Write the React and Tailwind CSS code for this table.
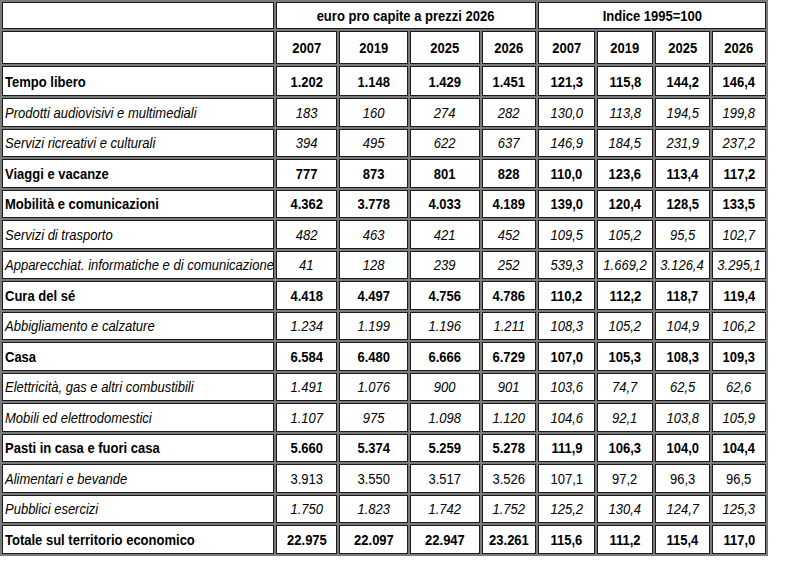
const rows = [
  { label: 'Tempo libero', type: 'bold', values: ['1.202', '1.148', '1.429', '1.451', '121,3', '115,8', '144,2', '146,4'] },
  { label: 'Prodotti audiovisivi e multimediali', type: 'italic', values: ['183', '160', '274', '282', '130,0', '113,8', '194,5', '199,8'] },
  { label: 'Servizi ricreativi e culturali', type: 'italic', values: ['394', '495', '622', '637', '146,9', '184,5', '231,9', '237,2'] },
  { label: 'Viaggi e vacanze', type: 'bold', values: ['777', '873', '801', '828', '110,0', '123,6', '113,4', '117,2'] },
  { label: 'Mobilità e comunicazioni', type: 'bold', values: ['4.362', '3.778', '4.033', '4.189', '139,0', '120,4', '128,5', '133,5'] },
  { label: 'Servizi di trasporto', type: 'italic', values: ['482', '463', '421', '452', '109,5', '105,2', '95,5', '102,7'] },
  { label: 'Apparecchiat. informatiche e di comunicazione', type: 'italic', values: ['41', '128', '239', '252', '539,3', '1.669,2', '3.126,4', '3.295,1'] },
  { label: 'Cura del sé', type: 'bold', values: ['4.418', '4.497', '4.756', '4.786', '110,2', '112,2', '118,7', '119,4'] },
  { label: 'Abbigliamento e calzature', type: 'italic', values: ['1.234', '1.199', '1.196', '1.211', '108,3', '105,2', '104,9', '106,2'] },
  { label: 'Casa', type: 'bold', values: ['6.584', '6.480', '6.666', '6.729', '107,0', '105,3', '108,3', '109,3'] },
  { label: 'Elettricità, gas e altri combustibili', type: 'italic', values: ['1.491', '1.076', '900', '901', '103,6', '74,7', '62,5', '62,6'] },
  { label: 'Mobili ed elettrodomestici', type: 'italic', values: ['1.107', '975', '1.098', '1.120', '104,6', '92,1', '103,8', '105,9'] },
  { label: 'Pasti in casa e fuori casa', type: 'bold', values: ['5.660', '5.374', '5.259', '5.278', '111,9', '106,3', '104,0', '104,4'] },
  { label: 'Alimentari e bevande', type: 'plain', values: ['3.913', '3.550', '3.517', '3.526', '107,1', '97,2', '96,3', '96,5'] },
  { label: 'Pubblici esercizi', type: 'italic', values: ['1.750', '1.823', '1.742', '1.752', '125,2', '130,4', '124,7', '125,3'] },
  { label: 'Totale sul territorio economico', type: 'bold', values: ['22.975', '22.097', '22.947', '23.261', '115,6', '111,2', '115,4', '117,0'] },
];

const years = ['2007', '2019', '2025', '2026'];

const cell = 'border border-[#1c1c1c] bg-white p-0';

// narrow look: Arial at 15px squeezed to the width of 13px
const Txt = ({ children, left }) => (
  <span className={`inline-block scale-x-[0.867] ${left ? 'origin-left' : 'origin-center'}`}>{children}</span>
);

export default function App() {
  return (
    <div className="w-[800px] h-[566px] bg-white text-black text-[15px] leading-none" style={{ fontFamily: '"Liberation Sans", Arial, sans-serif' }}>
      <table className="table-fixed w-[768px] border-separate border-spacing-[2px] bg-[#7a7a7a]">
        <colgroup>
          <col className="w-[272px]" />
          <col className="w-[61px]" />
          <col className="w-[69px]" />
          <col className="w-[70px]" />
          <col className="w-[54px]" />
          <col className="w-[57px]" />
          <col className="w-[56px]" />
          <col className="w-[55px]" />
          <col className="w-[54px]" />
        </colgroup>
        <thead>
          <tr className="h-[27px]">
            <th className={cell}></th>
            <th colSpan={4} className={`${cell} font-bold text-center`}><Txt>euro pro capite a prezzi 2026</Txt></th>
            <th colSpan={4} className={`${cell} font-bold text-center`}><Txt>Indice 1995=100</Txt></th>
          </tr>
          <tr className="h-[33px]">
            <th className={cell}></th>
            {years.concat(years).map((y, i) => (
              <th key={i} className={`${cell} font-bold text-center`}><Txt>{y}</Txt></th>
            ))}
          </tr>
        </thead>
        <tbody>
          {rows.map((row, r) => {
            const labelStyle = row.type === 'bold' ? 'font-bold' : 'italic';
            const numStyle = row.type === 'bold' ? 'font-bold' : row.type === 'italic' ? 'italic' : '';
            return (
              <tr key={r} className={r === 0 ? 'h-[30px]' : 'h-[28.5px]'}>
                <td className={`${cell} ${labelStyle} text-left pl-[2px] whitespace-nowrap overflow-visible`}><Txt left>{row.label}</Txt></td>
                {row.values.map((v, i) => (
                  <td key={i} className={`${cell} ${numStyle} text-center whitespace-nowrap`}><Txt>{v}</Txt></td>
                ))}
              </tr>
            );
          })}
        </tbody>
      </table>
    </div>
  );
}
